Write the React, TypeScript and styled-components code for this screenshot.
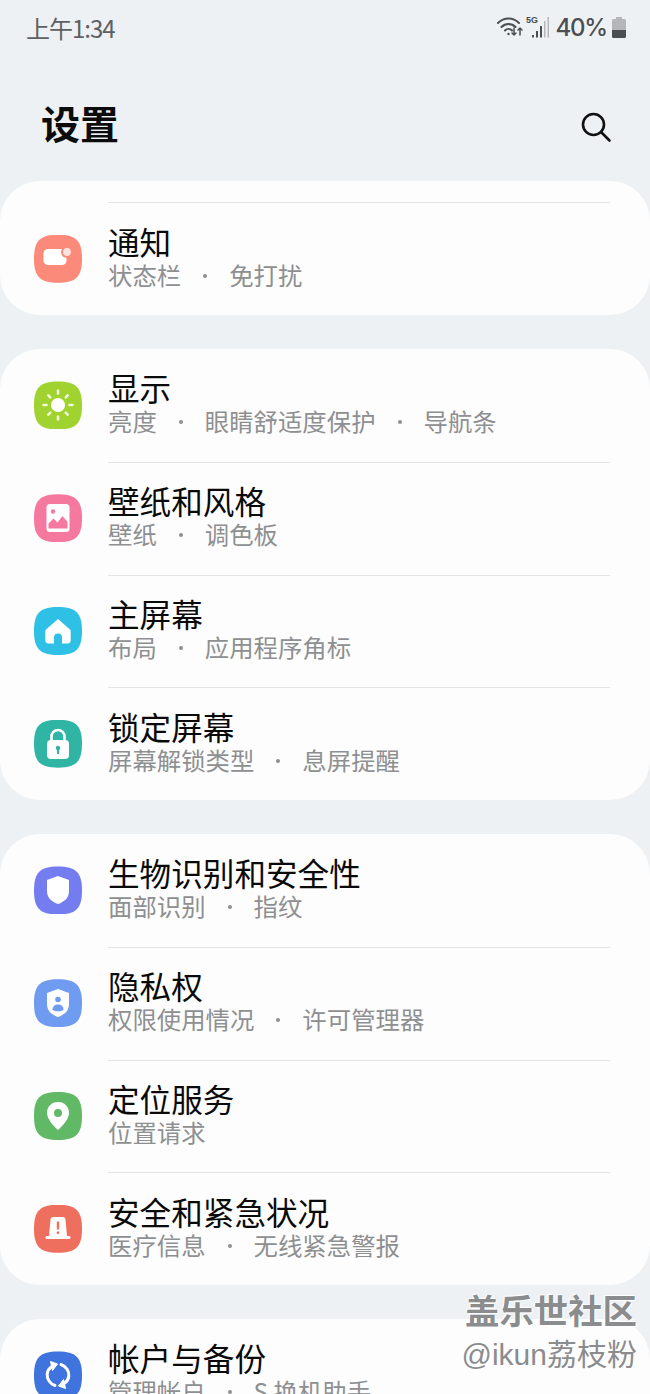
import React, { FC, ReactNode } from 'react';
import styled, { createGlobalStyle } from 'styled-components';

const GlobalStyle = createGlobalStyle`
  html, body {
    margin: 0;
    padding: 0;
    background: #eef1f4;
  }
  body {
    font-family: "Noto Sans CJK SC", "Noto Sans", sans-serif;
  }
`;

const Page = styled.div`
  position: relative;
  width: 650px;
  height: 1394px;
  overflow: hidden;
  background: #eef1f4;
`;

const StatusBar = styled.div`
  display: flex;
  align-items: center;
  justify-content: space-between;
  height: 54px;
  padding: 0 24px 0 26px;
`;

const Time = styled.span`
  font-size: 24px;
  letter-spacing: -1px;
  color: #5c6064;
`;

const StatusRight = styled.div`
  display: flex;
  align-items: center;
  gap: 2px;
  color: #4b4e52;
`;

const Battery = styled.span`
  font-family: "Inter", sans-serif;
  font-size: 24px;
  font-weight: 500;
  letter-spacing: -1.2px;
  margin: 0 3px 0 4px;
`;

const Header = styled.header`
  display: flex;
  align-items: center;
  justify-content: space-between;
  height: 127px;
  padding: 10px 38px 0 41px;
  box-sizing: border-box;

  svg {
    margin-top: 8px;
  }
`;

const Heading = styled.h1`
  margin: 0;
  font-size: 39px;
  font-weight: 700;
  line-height: 1;
  color: #0c0c0c;
`;

const Cards = styled.main`
  display: flex;
  flex-direction: column;
  gap: 34px;
`;

const Card = styled.section`
  background: #fdfdfd;
  border-radius: 40px;
`;

const TopRule = styled.div`
  height: 22px;
  margin: 0 40px -0.75px 108px;
  box-sizing: border-box;
  border-bottom: 1px solid #e3e4e6;
`;

const Row = styled.div<{ $divided: boolean }>`
  position: relative;
  display: flex;
  align-items: center;
  gap: 26px;
  height: 112.75px;
  padding-left: 34px;
  box-sizing: border-box;

  &::after {
    content: '';
    display: ${p => (p.$divided ? 'block' : 'none')};
    position: absolute;
    left: 108px;
    right: 40px;
    bottom: -1px;
    height: 1px;
    background: #e3e4e6;
  }
`;

const Badge = styled.div<{ $color: string }>`
  display: flex;
  align-items: center;
  justify-content: center;
  flex: none;
  width: 48px;
  height: 48px;
  clip-path: path('M24 0C42 0 48 6 48 24S42 48 24 48 0 42 0 24 6 0 24 0Z');
  background: ${p => p.$color};
`;

const RowText = styled.div`
  display: flex;
  flex-direction: column;
  padding-bottom: 2px;
`;

const Title = styled.div`
  font-size: 31.6px;
  line-height: 33px;
  color: #0a0a0a;
`;

const Subtitle = styled.div`
  display: flex;
  align-items: center;
  font-size: 24.4px;
  line-height: 33px;
  color: #8e8f91;
`;

const Dot = styled.span`
  width: 4px;
  height: 4px;
  margin: 3px 22px 0;
  border-radius: 50%;
  background: #8e8f91;
`;

const Watermark = styled.div`
  position: absolute;
  right: 13px;
  top: 1287px;
  display: flex;
  flex-direction: column;
  align-items: flex-end;
  color: #8b8c8e;
  text-shadow: 1px 1px 0 #ffffff, -1px -1px 0 #ffffff;
`;

const MarkName = styled.div`
  font-size: 34.4px;
  font-weight: 700;
  line-height: 44px;
`;

const MarkUser = styled.div`
  margin-top: 2px;
  font-family: "Liberation Sans", "Noto Sans CJK SC", sans-serif;
  font-size: 30px;
  line-height: 44px;
`;

const Wifi: FC = () => (
  <svg width="28" height="24" viewBox="0 0 28 24" fill="none" stroke="#4b4e52" strokeWidth="2" strokeLinecap="round">
    <path d="M2 8c6-6 15-6 21 0" />
    <path d="M5.5 12c4-4 10-4 14 0" />
    <path d="M9 15.5c2-2 5-2 7 0" />
    <circle cx="12.500" cy="19" r="1.200" fill="#4b4e52" stroke="none" />
    <path d="M18 13v7m-2-2 2 2 2-2" strokeWidth="1.500" />
    <path d="M24 20v-7m-2 2 2-2 2 2" strokeWidth="1.500" />
  </svg>
);

const Signal: FC = () => (
  <svg width="24" height="24" viewBox="0 0 24 24" fill="none">
    <text x="0" y="8" fontFamily="Liberation Sans" fontSize="9" fontWeight="700" fill="#4b4e52">5G</text>
    <rect x="6" y="20" width="2" height="2.500" fill="#4b4e52" />
    <rect x="10" y="16" width="2" height="6.500" fill="#4b4e52" />
    <rect x="14" y="11" width="2" height="11.500" fill="#4b4e52" />
    <rect x="18" y="6" width="1.500" height="16.500" fill="#b5b7ba" />
    <rect x="21.500" y="2" width="1.500" height="20.500" fill="#b5b7ba" />
  </svg>
);

const BatteryIcon: FC = () => (
  <svg width="14" height="21" viewBox="0 0 14 21">
    <path d="M4 0h6v2h2.500a1.500 1.500 0 0 1 1.500 1.500V13H0V3.500A1.500 1.500 0 0 1 1.500 2H4z" fill="#b4b6b9" />
    <path d="M0 13h14v6.500a1.500 1.500 0 0 1-1.500 1.500h-11A1.500 1.500 0 0 1 0 19.500z" fill="#4b4e52" />
  </svg>
);

const SearchIcon: FC = () => (
  <svg width="32" height="32" viewBox="0 0 32 32" fill="none" stroke="#111" strokeWidth="2.600" strokeLinecap="round">
    <circle cx="13.500" cy="13.500" r="10.500" />
    <path d="M21.500 21.500 29.500 29.500" />
  </svg>
);

const syncArc = (
  <>
    <path d="M13 26.500C7.500 24.500 4.800 19.500 5.200 15c.3-3 1.800-5.500 4.300-7.200" fill="none" stroke="#fff" strokeWidth="3" strokeLinecap="round" />
    <path d="M8.500 2.500 15.500 5 10.500 11.500z" fill="#fff" stroke="#fff" strokeWidth="1" strokeLinejoin="round" />
  </>
);

// white glyphs that sit on the coloured badges
const glyphs: Record<string, ReactNode> = {
  notify: (
    <svg width="32" height="32" viewBox="0 0 32 32">
      <rect x="1.500" y="6" width="23" height="16" rx="4.500" fill="#fff" />
      <circle cx="25" cy="9" r="6" fill="#fb8a7a" />
      <circle cx="25" cy="9" r="3.900" fill="#fde3df" />
    </svg>
  ),
  display: (
    <svg width="36" height="36" viewBox="0 0 36 36" fill="none" stroke="#f1f8d8" strokeWidth="2.600" strokeLinecap="round">
      <circle cx="18" cy="18" r="7" fill="#fff" stroke="none" />
      <path d="M18 3.500v3M18 29.500v3M3.500 18h3M29.500 18h3M8.300 8.300l2 2M25.700 25.700l2 2M8.300 27.700l2-2M25.700 10.300l2-2" />
    </svg>
  ),
  wallpaper: (
    <svg width="26" height="32" viewBox="0 0 26 32">
      <rect x="1.500" y="2" width="23" height="28" rx="3.500" fill="#fff" />
      <circle cx="8" cy="9.500" r="2.200" fill="#f5799f" />
      <path d="M3.500 26.500v-5l5-5 4 4 5-6.500 5 6v6.500z" fill="#f5799f" />
    </svg>
  ),
  home: (
    <svg width="30" height="30" viewBox="0 0 30 30">
      <path fillRule="evenodd" fill="#fff" d="M15 3 27 13.500a2 2 0 0 1 .7 1.500V24a3.500 3.500 0 0 1-3.500 3.500H5.800A3.500 3.500 0 0 1 2.300 24v-9a2 2 0 0 1 .7-1.500zM11 27.500v-6a4 4 0 0 1 8 0v6z" />
    </svg>
  ),
  lock: (
    <svg width="30" height="34" viewBox="0 0 30 34">
      <path d="M8.500 14V9.500a6.500 6.500 0 0 1 13 0V14" fill="none" stroke="#fff" strokeWidth="2.600" />
      <rect x="4" y="13" width="22" height="19" rx="4" fill="#fff" />
      <circle cx="15" cy="21" r="2.200" fill="#30b5a5" />
      <rect x="14" y="21" width="2" height="6" fill="#30b5a5" />
    </svg>
  ),
  shield: (
    <svg width="28" height="32" viewBox="0 0 28 32">
      <path d="M14 2 25 6v11c0 7-5 11-11 13C8 28 3 24 3 17V6z" fill="#fff" />
    </svg>
  ),
  privacy: (
    <svg width="28" height="32" viewBox="0 0 28 32">
      <path d="M14 2 25 6v11c0 7-5 11-11 13C8 28 3 24 3 17V6z" fill="#fff" />
      <circle cx="14" cy="12.500" r="2.800" fill="#6f9bf0" />
      <path d="M8.500 23c0-3.500 2.200-5.500 5.500-5.500s5.500 2 5.500 5.500c-3 1.800-8 1.800-11 0z" fill="#6f9bf0" />
    </svg>
  ),
  location: (
    <svg width="26" height="32" viewBox="0 0 26 32">
      <path fillRule="evenodd" fill="#fff" d="M13 2c6.500 0 11 4.800 11 10.800C24 19 18 25.500 13 30 8 25.500 2 19 2 12.800 2 6.800 6.500 2 13 2zm0 7a4 4 0 1 0 0 8 4 4 0 0 0 0-8z" />
    </svg>
  ),
  alert: (
    <svg width="32" height="32" viewBox="0 0 32 32">
      <path fill="#fff" d="M11.500 4h9a3 3 0 0 1 3 2.800L25 23H7L8.500 6.800a3 3 0 0 1 3-2.800z" />
      <rect x="3.500" y="23" width="25" height="3" rx="1.500" fill="#fff" />
      <rect x="14.800" y="8.500" width="2.400" height="8" fill="#ef6f5e" />
      <rect x="14.800" y="18.500" width="2.400" height="2.400" fill="#ef6f5e" />
    </svg>
  ),
  sync: (
    <svg width="32" height="32" viewBox="0 0 32 32">
      {syncArc}
      <g transform="rotate(180 16 16)">{syncArc}</g>
    </svg>
  ),
};

type Item = { icon: string; color: string; title: string; sub: string[] };

const groups: Item[][] = [
  [{ icon: 'notify', color: '#fb8a7a', title: '通知', sub: ['状态栏', '免打扰'] }],
  [
    { icon: 'display', color: '#a0d32f', title: '显示', sub: ['亮度', '眼睛舒适度保护', '导航条'] },
    { icon: 'wallpaper', color: '#f5799f', title: '壁纸和风格', sub: ['壁纸', '调色板'] },
    { icon: 'home', color: '#2fc0e6', title: '主屏幕', sub: ['布局', '应用程序角标'] },
    { icon: 'lock', color: '#30b5a5', title: '锁定屏幕', sub: ['屏幕解锁类型', '息屏提醒'] },
  ],
  [
    { icon: 'shield', color: '#747df0', title: '生物识别和安全性', sub: ['面部识别', '指纹'] },
    { icon: 'privacy', color: '#6f9bf0', title: '隐私权', sub: ['权限使用情况', '许可管理器'] },
    { icon: 'location', color: '#62b965', title: '定位服务', sub: ['位置请求'] },
    { icon: 'alert', color: '#ef6f5e', title: '安全和紧急状况', sub: ['医疗信息', '无线紧急警报'] },
  ],
  [{ icon: 'sync', color: '#3f73dd', title: '帐户与备份', sub: ['管理帐户', 'S 换机助手'] }],
];

const App: FC = () => (
  <Page>
    <GlobalStyle />
    <StatusBar>
      <Time>上午1:34</Time>
      <StatusRight>
        <Wifi />
        <Signal />
        <Battery>40%</Battery>
        <BatteryIcon />
      </StatusRight>
    </StatusBar>
    <Header>
      <Heading>设置</Heading>
      <SearchIcon />
    </Header>
    <Cards>
      {groups.map((items, g) => (
        <Card key={g}>
          {g === 0 && <TopRule />}
          {items.map((item, i) => (
            <Row key={item.title} $divided={i < items.length - 1}>
              <Badge $color={item.color}>{glyphs[item.icon]}</Badge>
              <RowText>
                <Title>{item.title}</Title>
                <Subtitle>
                  {item.sub.map((part, p) => (
                    <React.Fragment key={part}>
                      {p > 0 && <Dot />}
                      {part}
                    </React.Fragment>
                  ))}
                </Subtitle>
              </RowText>
            </Row>
          ))}
        </Card>
      ))}
    </Cards>
    <Watermark>
      <MarkName>盖乐世社区</MarkName>
      <MarkUser>@ikun荔枝粉</MarkUser>
    </Watermark>
  </Page>
);

export default App;
